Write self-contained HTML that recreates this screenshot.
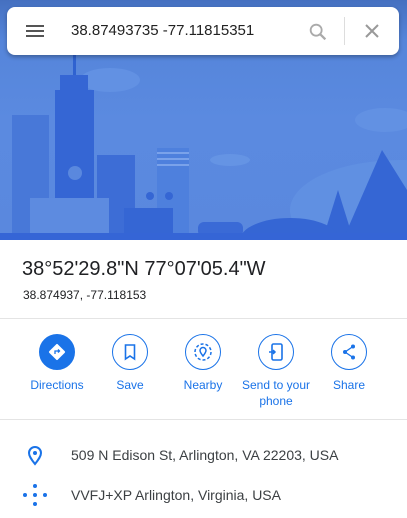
<!DOCTYPE html><html><head><style>
body{margin:0;width:407px;height:518px;overflow:hidden;font-family:"Liberation Sans",Arial,sans-serif;background:#fff;position:relative}
.hero{position:absolute;left:0;top:0;width:407px;height:240px;background:linear-gradient(#4570c0 0,#5585da 40px,#5b8ae0 120px,#5a88de 240px);overflow:hidden}
.box{position:absolute;left:7px;top:7px;width:392px;height:48px;background:#fff;border-radius:8px;box-shadow:0 2px 4px rgba(0,0,0,.3)}
.t{position:absolute;white-space:nowrap}
.btn{position:absolute;top:334px;width:34px;height:34px;border:1px solid #1a73e8;border-radius:50%;}
.lbl{position:absolute;top:377px;width:90px;text-align:center;color:#1a73e8;font-size:12px;line-height:16px}
</style></head><body>
<div class="hero">
<svg width="407" height="240" style="position:absolute;left:0;top:0">
<ellipse cx="110" cy="80" rx="30" ry="12" fill="#6291e3"/>
<ellipse cx="385" cy="120" rx="30" ry="12" fill="#6291e3"/>
<ellipse cx="230" cy="160" rx="20" ry="6" fill="#6594e4"/>
<ellipse cx="400" cy="210" rx="110" ry="50" fill="#6090e2"/>
<rect x="73" y="55" width="3" height="25" fill="#2f62d0"/>
<rect x="60" y="75" width="28" height="15" fill="#3566d4"/>
<rect x="55" y="90" width="39" height="110" fill="#3566d4"/>
<rect x="12" y="115" width="37" height="120" fill="#4878d8"/>
<rect x="97" y="155" width="38" height="80" fill="#3d6dd6"/>
<rect x="157" y="148" width="32" height="85" fill="#4e80dd"/>
<g fill="#7aa2ea"><rect x="157" y="152" width="32" height="2"/><rect x="157" y="158" width="32" height="2"/><rect x="157" y="164" width="32" height="2"/></g>
<rect x="30" y="198" width="79" height="37" fill="#5d8be0"/>
<rect x="124" y="208" width="49" height="27" fill="#3566d4"/>
<circle cx="150" cy="196" r="4" fill="#3566d4"/><circle cx="169" cy="196" r="4" fill="#3566d4"/>
<circle cx="75" cy="173" r="7" fill="#5a88de"/>
<polygon points="338,235 324,235 338,190 352,235" fill="#3566d4"/>
<polygon points="382,150 345,235 407,235 407,190" fill="#3566d4"/>
<ellipse cx="290" cy="240" rx="50" ry="22" fill="#3566d4"/>
<rect x="198" y="222" width="45" height="15" rx="6" fill="#3a6ad6"/>
<rect x="0" y="233" width="407" height="7" fill="#3565d6"/>
</svg>
</div>
<div class="box">
<div style="position:absolute;left:19px;top:18px;width:18px;height:2px;background:#555;box-shadow:0 5px 0 #555,0 10px 0 #555"></div>
<div class="t" style="left:64px;top:15px;font-size:15px;color:#222">38.87493735 -77.11815351</div>
<svg style="position:absolute;left:300px;top:14px" width="22" height="22" viewBox="0 0 24 24"><circle cx="10" cy="10" r="6" fill="none" stroke="#aaa" stroke-width="2"/><path d="M14.5 14.5L20 20" stroke="#aaa" stroke-width="2.5"/></svg>
<div style="position:absolute;left:337px;top:10px;width:1px;height:28px;background:#ddd"></div>
<svg style="position:absolute;left:357px;top:16px" width="16" height="16"><path d="M2 2L14 14M14 2L2 14" stroke="#999" stroke-width="2"/></svg>
</div>
<div class="t" style="left:22px;top:258px;font-size:20px;color:#202124">38°52'29.8"N 77°07'05.4"W</div>
<div class="t" style="left:23px;top:288px;font-size:12px;color:#202124">38.874937, -77.118153</div>
<div style="position:absolute;left:0;top:318px;width:407px;height:1px;background:#e4e4e4"></div>
<div class="btn" style="left:39px;background:#1a73e8"><svg width="34" height="34"><rect x="11" y="11" width="12" height="12" transform="rotate(45 17 17)" fill="#fff" rx="1"/><path d="M15 19v-3h4M18 14.5l1.5 1.5-1.5 1.5" stroke="#1a73e8" fill="none" stroke-width="1.3"/></svg></div>
<div class="btn" style="left:112px"><svg width="34" height="34"><path d="M12.5 10h9v14l-4.5-3-4.5 3z" fill="none" stroke="#1a73e8" stroke-width="1.6"/></svg></div>
<div class="btn" style="left:185px"><svg width="34" height="34"><circle cx="17" cy="17" r="8" fill="none" stroke="#1a73e8" stroke-width="1.5" stroke-dasharray="3 2"/><path d="M17 21c-2-2.5-3-4-3-5.5a3 3 0 016 0c0 1.5-1 3-3 5.5z" fill="none" stroke="#1a73e8" stroke-width="1.5"/></svg></div>
<div class="btn" style="left:258px"><svg width="34" height="34"><rect x="13" y="9" width="10" height="16" rx="1.5" fill="none" stroke="#1a73e8" stroke-width="1.6"/><path d="M10 17h6M14 15l2 2-2 2" stroke="#1a73e8" fill="none" stroke-width="1.5"/></svg></div>
<div class="btn" style="left:331px"><svg width="34" height="34"><circle cx="21" cy="11.5" r="2" fill="#1a73e8"/><circle cx="13" cy="17" r="2" fill="#1a73e8"/><circle cx="21" cy="22.5" r="2" fill="#1a73e8"/><path d="M21 11.5L13 17L21 22.5" stroke="#1a73e8" fill="none" stroke-width="1.3"/></svg></div>
<div class="lbl" style="left:12px">Directions</div>
<div class="lbl" style="left:85px">Save</div>
<div class="lbl" style="left:158px">Nearby</div>
<div class="lbl" style="left:231px">Send to your<br>phone</div>
<div class="lbl" style="left:304px">Share</div>
<div style="position:absolute;left:0;top:419px;width:407px;height:1px;background:#e4e4e4"></div>
<svg style="position:absolute;left:26px;top:445px" width="18" height="22"><path d="M9 19c-4-5-6-8-6-11a6 6 0 0112 0c0 3-2 6-6 11z" fill="none" stroke="#1a73e8" stroke-width="2"/><circle cx="9" cy="8" r="2" fill="#1a73e8"/></svg>
<div class="t" style="left:71px;top:447px;font-size:14px;color:#3c4043">509 N Edison St, Arlington, VA 22203, USA</div>
<svg style="position:absolute;left:22px;top:483px" width="26" height="26"><g fill="#1a73e8"><circle cx="13" cy="3" r="2"/><circle cx="13" cy="12" r="2"/><circle cx="13" cy="21" r="2"/><circle cx="3" cy="12" r="2"/><circle cx="23" cy="12" r="2"/><circle cx="8" cy="12" r="2" opacity=".0"/></g></svg>
<div class="t" style="left:71px;top:487px;font-size:14px;color:#3c4043">VVFJ+XP Arlington, Virginia, USA</div>
</body></html>
